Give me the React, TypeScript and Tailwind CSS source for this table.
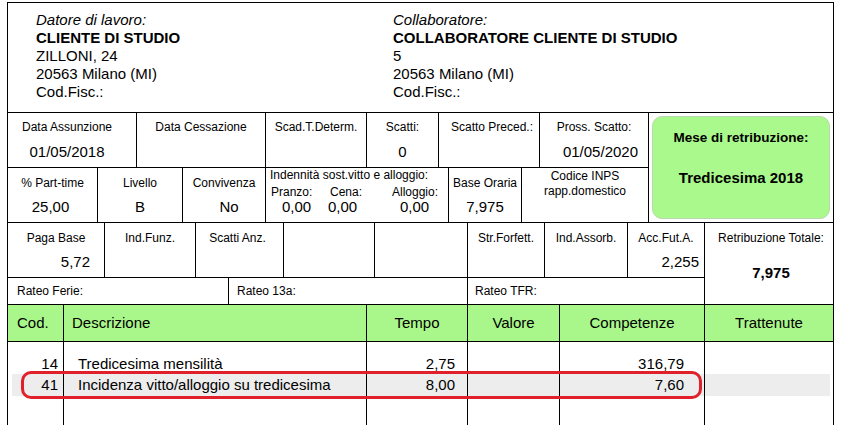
import React from "react";

const font = { fontFamily: '"Liberation Sans", Arial, sans-serif' };

const Label = ({ children }: { children: React.ReactNode }) => (
  <div className="text-[12px] leading-[14px] text-center">{children}</div>
);

const BodyRow = ({
  cod,
  desc,
  tempo,
  comp,
  className = "h-[21px]",
}: {
  cod?: string;
  desc?: string;
  tempo?: string;
  comp?: string;
  className?: string;
}) => (
  <div
    className={`grid grid-cols-[56px_303px_101px_92px_145px_1fr] text-[15px] leading-[21px] ${className}`}
  >
    <div className="border-r border-black text-right pr-[5px]">{cod}</div>
    <div className="border-r border-black pl-[14px]">{desc}</div>
    <div className="border-r border-black text-right pr-[12px]">{tempo}</div>
    <div className="border-r border-black" />
    <div className="border-r border-black text-right pr-[20px]">{comp}</div>
    <div />
  </div>
);

export default function App() {
  return (
    <div className="w-[862px] h-[425px] overflow-hidden bg-white text-black" style={font}>
      <div className="relative mt-[2px] ml-[7px] w-[827px] border border-black">
        {/* Header: datore / collaboratore */}
        <div className="grid grid-cols-[385px_1fr] h-[110px] border-b border-black text-[15px] leading-[18px]">
          <div className="pl-[28px] pt-[8px]">
            <div className="italic">Datore di lavoro:</div>
            <div className="font-bold">CLIENTE DI STUDIO</div>
            <div>ZILLONI, 24</div>
            <div>20563 Milano (MI)</div>
            <div>Cod.Fisc.:</div>
          </div>
          <div className="pt-[8px]">
            <div className="italic">Collaboratore:</div>
            <div className="font-bold">COLLABORATORE CLIENTE DI STUDIO</div>
            <div>5</div>
            <div>20563 Milano (MI)</div>
            <div>Cod.Fisc.:</div>
          </div>
        </div>

        {/* Rows 1-2 + mese */}
        <div className="flex border-b border-black">
          <div className="w-[641px]">
            <div className="grid grid-cols-[129px_129px_101px_72px_101px_109px] h-[55px] border-b border-black">
              <div className="border-r border-black pt-[7px] pr-[10px]">
                <Label>Data Assunzione</Label>
                <div className="mt-[9px] text-[15px] leading-[18px] text-center">01/05/2018</div>
              </div>
              <div className="border-r border-black pt-[7px]">
                <Label>Data Cessazione</Label>
              </div>
              <div className="border-r border-black pt-[7px]">
                <Label>Scad.T.Determ.</Label>
              </div>
              <div className="border-r border-black pt-[7px]">
                <Label>Scatti:</Label>
                <div className="mt-[9px] text-[15px] leading-[18px] text-center">0</div>
              </div>
              <div className="border-r border-black pt-[7px] pl-[6px]">
                <Label>Scatto Preced.:</Label>
              </div>
              <div className="border-r border-black pt-[7px]">
                <Label>Pross. Scatto:</Label>
                <div className="mt-[9px] text-[15px] leading-[18px] text-right pr-[10px]">01/05/2020</div>
              </div>
            </div>
            <div className="grid grid-cols-[90px_85px_83px_183px_73px_127px] h-[54px]">
              <div className="border-r border-black pt-[8px]">
                <Label>% Part-time</Label>
                <div className="mt-[8px] text-[15px] leading-[18px] text-center pr-[4px]">25,00</div>
              </div>
              <div className="border-r border-black pt-[8px]">
                <Label>Livello</Label>
                <div className="mt-[8px] text-[15px] leading-[18px] text-center">B</div>
              </div>
              <div className="border-r border-black pt-[8px]">
                <Label>Convivenza</Label>
                <div className="mt-[8px] text-[15px] leading-[18px] text-center pl-[10px]">No</div>
              </div>
              <div className="border-r border-black pl-[4px]">
                <div className="text-[12px] leading-[14px]">Indennità sost.vitto e alloggio:</div>
                <div className="grid grid-cols-[57px_63px_56px] mt-[3px] text-[12px] leading-[14px]">
                  <div className="pl-[1px]">Pranzo:</div>
                  <div className="pl-[3px]">Cena:</div>
                  <div className="pl-[2px]">Alloggio:</div>
                </div>
                <div className="grid grid-cols-[57px_63px_56px] text-[15px] leading-[16px]">
                  <div className="pl-[12px]">0,00</div>
                  <div className="pl-[1px]">0,00</div>
                  <div className="pl-[10px]">0,00</div>
                </div>
              </div>
              <div className="border-r border-black pt-[8px]">
                <Label>Base Oraria</Label>
                <div className="mt-[8px] text-[15px] leading-[18px] text-center">7,975</div>
              </div>
              <div className="border-r border-black pt-[1px] text-[12px] leading-[15px] text-center">
                <div>Codice INPS</div>
                <div>rapp.domestico</div>
              </div>
            </div>
          </div>
          <div className="flex-1 pl-[3px] pr-[3px] pt-[3px] pb-[3px]">
            <div className="h-full rounded-[10px] border border-[#b9d8ad] bg-[#aaf98c] flex flex-col items-center font-bold">
              <div className="mt-[13px] text-[13.5px] leading-[16px]">Mese di retribuzione:</div>
              <div className="mt-[23px] text-[15px] leading-[18px]">Tredicesima 2018</div>
            </div>
          </div>
        </div>

        {/* Rows 3-4 + retribuzione totale */}
        <div className="flex border-b border-black">
          <div className="w-[697px]">
            <div className="grid grid-cols-[97px_91px_88px_91px_93px_77px_83px_77px] h-[55px] border-b border-black">
              <div className="border-r border-black pt-[8px]">
                <Label>Paga Base</Label>
                <div className="mt-[8px] text-[15px] leading-[18px] text-right pr-[14px]">5,72</div>
              </div>
              <div className="border-r border-black pt-[8px]">
                <Label>Ind.Funz.</Label>
              </div>
              <div className="border-r border-black pt-[8px] pr-[4px]">
                <Label>Scatti Anz.</Label>
              </div>
              <div className="border-r border-black" />
              <div className="border-r border-black" />
              <div className="border-r border-black pt-[8px]">
                <Label>Str.Forfett.</Label>
              </div>
              <div className="border-r border-black pt-[8px]">
                <Label>Ind.Assorb.</Label>
              </div>
              <div className="border-r border-black pt-[8px]">
                <Label>Acc.Fut.A.</Label>
                <div className="mt-[8px] text-[15px] leading-[18px] text-right pr-[5px]">2,255</div>
              </div>
            </div>
            <div className="grid grid-cols-[221px_239px_237px] h-[26px] text-[12px] leading-[26px]">
              <div className="border-r border-black pl-[9px]">Rateo Ferie:</div>
              <div className="border-r border-black pl-[8px]">Rateo 13a:</div>
              <div className="border-r border-black pl-[7px]">Rateo TFR:</div>
            </div>
          </div>
          <div className="flex-1 pt-[8px] pl-[4px]">
            <Label>Retribuzione Totale:</Label>
            <div className="mt-[19px] text-[15px] leading-[18px] font-bold text-center">7,975</div>
          </div>
        </div>

        {/* Table header */}
        <div className="grid grid-cols-[56px_303px_101px_92px_145px_1fr] h-[37px] border-b border-black bg-[#a9f78b] text-[15px] leading-[36px]">
          <div className="border-r border-black pl-[9px]">Cod.</div>
          <div className="border-r border-black pl-[8px]">Descrizione</div>
          <div className="border-r border-black text-center">Tempo</div>
          <div className="border-r border-black text-center">Valore</div>
          <div className="border-r border-black text-center">Competenze</div>
          <div className="text-center">Trattenute</div>
        </div>

        {/* Body */}
        <BodyRow className="h-[11px]" />
        <BodyRow cod="14" desc="Tredicesima mensilità" tempo="2,75" comp="316,79" />
        <BodyRow
          cod="41"
          desc="Incidenza vitto/alloggio su tredicesima"
          tempo="8,00"
          comp="7,60"
          className="h-[22px] bg-[linear-gradient(to_right,white_4px,#ededed_4px,#ededed_calc(100%-3px),white_calc(100%-3px))]"
        />
        <BodyRow className="h-[50px]" />

        {/* red highlight */}
        <div className="absolute left-[13px] top-[368px] w-[681px] h-[28px] rounded-[10px] border-[3px] border-[#e0202a]" />
      </div>
    </div>
  );
}
